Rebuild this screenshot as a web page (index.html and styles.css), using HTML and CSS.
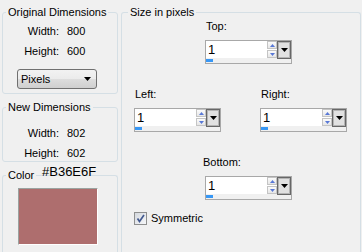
FILE: index.html
```html
<!DOCTYPE html>
<html lang="en">

<head>
    <meta charset="UTF-8" />
    <meta name="viewport" content="width=device-width, initial-scale=1.0" />
    <title>Canvas Size</title>
    <link rel="stylesheet" href="styles.css">
</head>

<body>
    <div class="dialog">
        <div class="left-col">
            <fieldset class="group group-orig">
                <legend>Original Dimensions</legend>
                <div class="dims">
                    <span class="dim-label">Width:</span><span>800</span>
                    <span class="dim-label">Height:</span><span>600</span>
                </div>
                <div class="select">
                    <span>Pixels</span>
                    <svg width="7" height="4" viewBox="0 0 7 4"><polygon points="0,0 7,0 3.5,4" fill="#000" /></svg>
                </div>
            </fieldset>

            <fieldset class="group group-new">
                <legend>New Dimensions</legend>
                <div class="dims">
                    <span class="dim-label">Width:</span><span>802</span>
                    <span class="dim-label">Height:</span><span>602</span>
                </div>
            </fieldset>

            <fieldset class="group group-color">
                <legend>Color<span class="hex">#B36E6F</span></legend>
                <div class="swatch"></div>
            </fieldset>
        </div>

        <fieldset class="group group-size">
            <legend>Size in pixels</legend>

            <div class="field field-top">
                <label>Top:</label>
                <div class="spin">
                    <div class="edit">1</div>
                    <div class="arrows">
                        <div class="arrow"><svg width="5" height="3" viewBox="0 0 5 3"><polygon points="0,3 5,3 2.5,0" /></svg></div>
                        <div class="arrow"><svg width="5" height="3" viewBox="0 0 5 3"><polygon points="0,0 5,0 2.5,3" /></svg></div>
                    </div>
                    <div class="drop"><svg width="7" height="4" viewBox="0 0 7 4"><polygon points="0,0 7,0 3.5,4" /></svg></div>
                    <div class="strip"><span class="chunk"></span></div>
                </div>
            </div>

            <div class="side-row">
                <div class="field field-left">
                    <label>Left:</label>
                    <div class="spin">
                        <div class="edit">1</div>
                        <div class="arrows">
                            <div class="arrow"><svg width="5" height="3" viewBox="0 0 5 3"><polygon points="0,3 5,3 2.5,0" /></svg></div>
                            <div class="arrow"><svg width="5" height="3" viewBox="0 0 5 3"><polygon points="0,0 5,0 2.5,3" /></svg></div>
                        </div>
                        <div class="drop"><svg width="7" height="4" viewBox="0 0 7 4"><polygon points="0,0 7,0 3.5,4" /></svg></div>
                        <div class="strip"><span class="chunk"></span></div>
                    </div>
                </div>
                <div class="field field-right">
                    <label>Right:</label>
                    <div class="spin">
                        <div class="edit">1</div>
                        <div class="arrows">
                            <div class="arrow"><svg width="5" height="3" viewBox="0 0 5 3"><polygon points="0,3 5,3 2.5,0" /></svg></div>
                            <div class="arrow"><svg width="5" height="3" viewBox="0 0 5 3"><polygon points="0,0 5,0 2.5,3" /></svg></div>
                        </div>
                        <div class="drop"><svg width="7" height="4" viewBox="0 0 7 4"><polygon points="0,0 7,0 3.5,4" /></svg></div>
                        <div class="strip"><span class="chunk"></span></div>
                    </div>
                </div>
            </div>

            <div class="field field-bottom">
                <label>Bottom:</label>
                <div class="spin">
                    <div class="edit">1</div>
                    <div class="arrows">
                        <div class="arrow"><svg width="5" height="3" viewBox="0 0 5 3"><polygon points="0,3 5,3 2.5,0" /></svg></div>
                        <div class="arrow"><svg width="5" height="3" viewBox="0 0 5 3"><polygon points="0,0 5,0 2.5,3" /></svg></div>
                    </div>
                    <div class="drop"><svg width="7" height="4" viewBox="0 0 7 4"><polygon points="0,0 7,0 3.5,4" /></svg></div>
                    <div class="strip"><span class="chunk"></span></div>
                </div>
            </div>

            <label class="check">
                <span class="box"><svg width="11" height="11" viewBox="0 0 11 11"><path d="M2.5 5.5 L4.5 8.5 L9 2" fill="none" stroke="#42598f" stroke-width="1.7" /></svg></span>
                <span>Symmetric</span>
            </label>
        </fieldset>
    </div>
</body>

</html>
```

FILE: styles.css
```css
body {
    margin: 0;
    background: #f0f0f0;
    font-family: 'Liberation Sans', Arial, sans-serif;
    font-size: 11px;
    color: #000;
    overflow: hidden;
}

.dialog {
    display: flex;
    height: 252px;
    box-sizing: border-box;
    padding-top: 6px;
}

.left-col {
    width: 116px;
    margin-left: 2px;
    display: flex;
    flex-direction: column;
}

.group {
    margin: 0;
    padding: 0;
    min-width: 0;
    border: 1px solid #d5dfe5;
    border-radius: 3px;
    box-sizing: border-box;
}

.group legend {
    margin-left: 3px;
    padding: 0 2px;
    line-height: 13px;
}

.group-orig {
    padding: 4px 0;
}

.group-new {
    margin-top: 7px;
    padding-top: 11px;
}

/* the lower groups run on past the bottom of the window */
.group-color,
.group-size {
    border-bottom: 0;
    border-radius: 3px 3px 0 0;
}

.group-color {
    flex: 1;
    margin-top: 7px;
    padding-top: 6px;
}

.group-color legend {
    position: relative;
}

.hex {
    position: absolute;
    left: 36px;
    top: -5px;
    font-size: 13px;
    line-height: 15px;
    white-space: nowrap;
}

.dims {
    display: grid;
    grid-template-columns: 56px auto;
    column-gap: 8px;
    row-gap: 4px;
    line-height: 16px;
}

.dim-label {
    text-align: right;
}

.select {
    margin: 10px 0 0 14px;
    width: 80px;
    height: 20px;
    box-sizing: border-box;
    border: 1px solid #707070;
    border-radius: 3px;
    background: linear-gradient(#f2f2f2, #ebebeb 50%, #dddddd 51%, #cfcfcf);
    display: flex;
    align-items: center;
    justify-content: space-between;
    padding: 0 5px 0 3px;
}

.swatch {
    margin-left: 15px;
    width: 80px;
    height: 57px;
    box-sizing: border-box;
    background: #ae6e6e;
    border: 1px solid;
    border-color: #9aa3a0 #fff #fff #9aa3a0;
}

.group-size {
    width: 240px;
    margin-left: 3px;
    padding-top: 1px;
}

.group-size legend {
    margin-left: 6px;
}

.field label {
    display: block;
    line-height: 13px;
    margin-bottom: 7px;
    padding-left: 1px;
}

.field-top,
.field-bottom {
    margin-left: 83px;
}

.field-bottom {
    margin-top: 24px;
}

.field-bottom label {
    padding-left: 0;
    margin-left: -2px;
}

.side-row {
    display: flex;
    margin-top: 24px;
    margin-left: 12px;
    gap: 39px;
}

.spin {
    width: 87px;
    height: 24px;
    box-sizing: border-box;
    border: 1px solid #a8a8a8;
    display: grid;
    grid-template-columns: 61px 10px 14px;
    grid-template-rows: 17px 5px;
    background: #f0f0f0;
}

.edit {
    background: #fff;
    font-size: 13px;
    line-height: 17px;
    padding-left: 2px;
}

.arrows {
    display: flex;
    flex-direction: column;
    gap: 1px;
    background: #fff;
}

.arrow {
    height: 8px;
    box-sizing: border-box;
    border: 1px solid #c4c4c4;
    background: linear-gradient(#fbfbfb, #e6e6e6);
    display: flex;
    align-items: center;
    justify-content: center;
}

.arrow svg {
    fill: #5878d6;
}

.drop {
    height: 18px;
    box-sizing: border-box;
    border: 1px solid #676767;
    box-shadow: inset 0 0 0 1px #b4b4b4;
    background: #e1e1e1;
    display: flex;
    align-items: center;
    justify-content: center;
}

.strip {
    grid-column: 1 / 4;
    padding-top: 1px;
}

.chunk {
    display: block;
    width: 7px;
    height: 3px;
    background: #3797f5;
}

.check {
    display: flex;
    align-items: center;
    gap: 4px;
    margin: 12px 0 0 12px;
    line-height: 13px;
}

.box {
    width: 13px;
    height: 13px;
    box-sizing: border-box;
    border: 1px solid #8e8f8f;
    background: linear-gradient(135deg, #d4d8de, #f6f7f9);
    display: flex;
    align-items: center;
    justify-content: center;
}
```
